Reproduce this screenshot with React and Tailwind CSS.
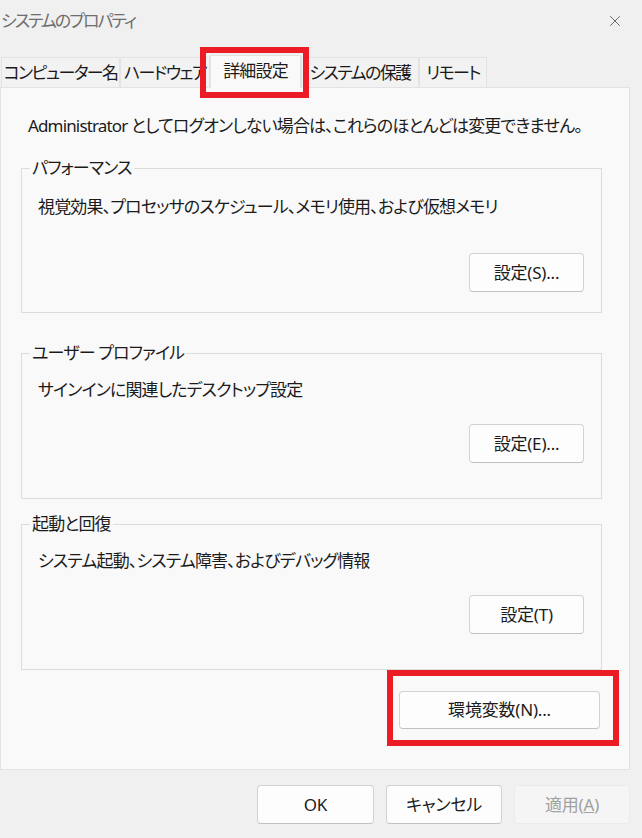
import { X } from "lucide-react";

const tabs = [
  { label: "コンピューター名", w: "w-[119px]" },
  { label: "ハードウェア", w: "w-[90px]" },
  { label: "詳細設定", w: "w-[91px]", active: true },
  { label: "システムの保護", w: "w-[118px]" },
  { label: "リモート", w: "w-[68px]" },
];

function Tab({ label, w, active }) {
  if (active) {
    return (
      <div
        className={`${w} relative z-10 -mb-px flex h-[33px] items-center justify-center border border-b-0 border-[#e3e3e3] bg-[#f9f9f9] pb-[2px] whitespace-nowrap`}
      >
        {label}
      </div>
    );
  }
  return (
    <div
      className={`${w} flex h-[30px] items-center justify-center border border-b-0 border-[#e3e3e3] bg-[#f2f2f2] whitespace-nowrap overflow-hidden tracking-[-1.6px]`}
    >
      {label}
    </div>
  );
}

function Button({ children, className = "", disabled }) {
  return (
    <div
      className={`flex items-center justify-center rounded-[4px] border tracking-[-0.2px] ${
        disabled
          ? "border-[#ebebeb] bg-[#f5f5f5] text-[#a0a0a0]"
          : "border-[#d2d2d2] border-b-[#c2c2c2] bg-[#fdfdfd] text-[#1b1b1b]"
      } ${className}`}
    >
      {children}
    </div>
  );
}

function GroupBox({ title, desc, button, height, mt, pt, gap }) {
  return (
    <fieldset className={`w-[581px] ${height} ${mt} border border-[#dcdcdc]`}>
      <legend className="ml-[8px] px-[2px] leading-[24px]">{title}</legend>
      <div className={`flex flex-col pl-[16px] pr-[17px] ${pt}`}>
        <div className="leading-[24px] whitespace-nowrap">{desc}</div>
        <div className={`flex justify-end ${gap}`}>
          <Button className="h-[39px] w-[115px]">{button}</Button>
        </div>
      </div>
    </fieldset>
  );
}

export default function App() {
  return (
    <div className="relative h-[838px] w-[642px] overflow-hidden bg-[#f0f0f0] font-['Noto_Sans','Noto_Sans_CJK_JP',sans-serif] text-[17px] tracking-[-0.85px] text-[#1b1b1b] [font-feature-settings:'palt']">
      <div className="flex h-[42px] items-center justify-between pl-[1px] pr-[18px]">
        <span className="leading-[24px] tracking-[-2px] text-[#6e6e6e]">システムのプロパティ</span>
        <X size={18} strokeWidth={1.2} className="text-[#5a5a5a]" />
      </div>

      <div className="flex h-[45px] items-end pl-[1px]">
        {tabs.map((t) => (
          <Tab key={t.label} {...t} />
        ))}
      </div>

      <div className="flex h-[683px] w-[630px] flex-col border border-[#e3e3e3] bg-[#f9f9f9] pl-[20px] pt-[26px]">
        <div className="ml-[7px] leading-[24px] whitespace-nowrap">
          Administrator としてログオンしない場合は、これらのほとんどは変更できません。
        </div>

        <GroupBox
          title="パフォーマンス"
          desc="視覚効果、プロセッサのスケジュール、メモリ使用、および仮想メモリ"
          button="設定(S)..."
          height="h-[157px]"
          mt="mt-[18px]"
          pt="pt-[15px]"
          gap="mt-[34px]"
        />
        <GroupBox
          title="ユーザー プロファイル"
          desc="サインインに関連したデスクトップ設定"
          button="設定(E)..."
          height="h-[158px]"
          mt="mt-[28px]"
          pt="pt-[13px]"
          gap="mt-[22px]"
        />
        <GroupBox
          title="起動と回復"
          desc="システム起動、システム障害、およびデバッグ情報"
          button="設定(T)"
          height="h-[158px]"
          mt="mt-[13px]"
          pt="pt-[13px]"
          gap="mt-[22px]"
        />

        <div className="flex justify-end pr-[10px]">
          <div className="border-[6px] border-[#ec1c24] pb-[11px] pl-[6px] pr-[13px] pt-[15px]">
            <Button className="h-[38px] w-[201px]">環境変数(N)...</Button>
          </div>
        </div>
      </div>

      <div className="flex justify-end gap-[14px] pr-[12px] pt-[15px]">
        <Button className="h-[39px] w-[117px]">OK</Button>
        <Button className="-ml-[2px] h-[39px] w-[116px]">キャンセル</Button>
        <Button className="-ml-[2px] h-[39px] w-[116px]" disabled>
          適用(<span className="underline">A</span>)
        </Button>
      </div>

      <div className="absolute left-[200px] top-[47px] h-[51px] w-[109px] border-[6px] border-[#ec1c24]" />
    </div>
  );
}
